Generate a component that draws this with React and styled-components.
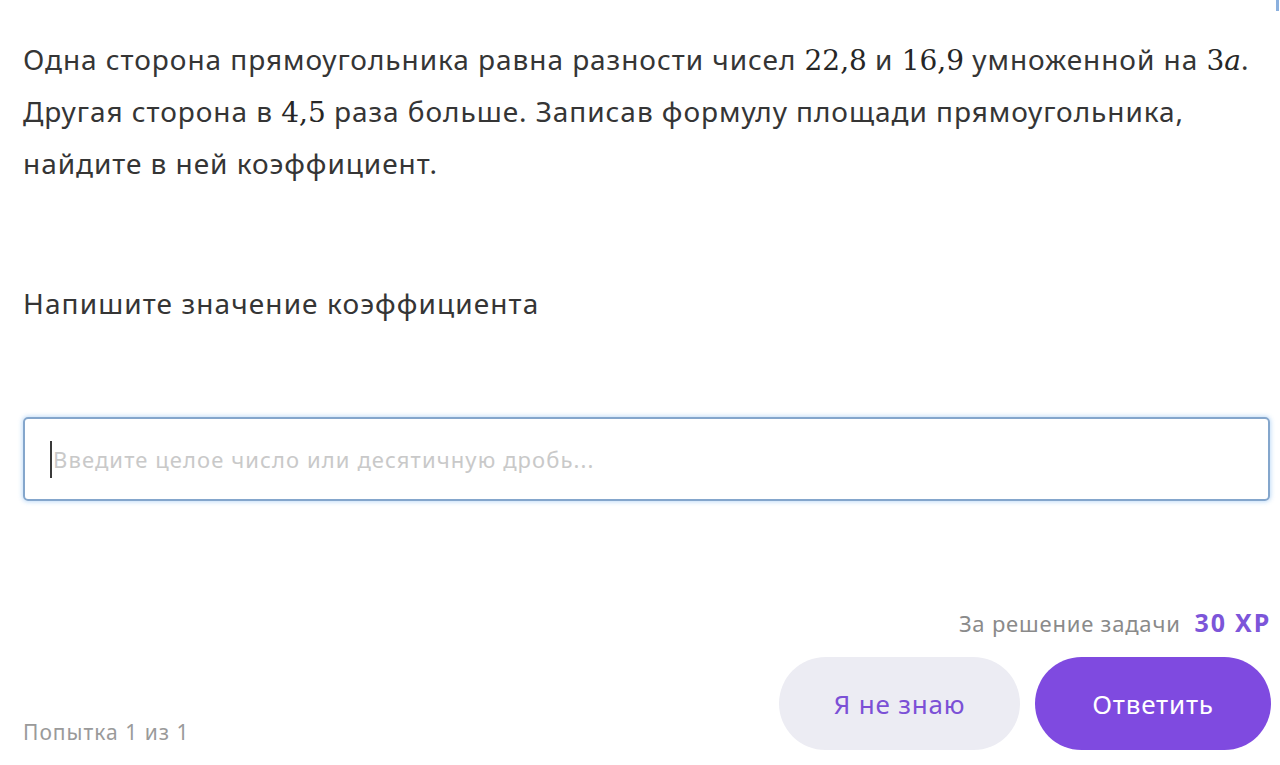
import styled, { createGlobalStyle } from "styled-components";

const GlobalStyle = createGlobalStyle`
  html, body {
    margin: 0;
    padding: 0;
    background: #ffffff;
  }
  body {
    font-family: "Noto Sans", "Open Sans", sans-serif;
    color: #353535;
  }
`;

const Page = styled.div`
  position: relative;
  width: 1280px;
  height: 765px;
  box-sizing: border-box;
  padding: 34px 9px 0 23px;
  display: flex;
  flex-direction: column;
  overflow: hidden;
`;

const EdgeMark = styled.div`
  position: absolute;
  top: 0;
  right: 1px;
  width: 3px;
  height: 11px;
  background: #5a8fd0;
  opacity: 0.7;
`;

const Question = styled.p`
  margin: 0;
  font-size: 28px;
  letter-spacing: 0.95px;
  line-height: 51px;
  color: #353535;
  white-space: nowrap;
`;

const Num = styled.span`
  font-family: "DejaVu Serif", "Liberation Serif", serif;
  font-size: 28px;
  letter-spacing: 0;
  color: #262626;
  font-style: ${(p) => (p.$italic ? "italic" : "normal")};
`;

const Prompt = styled.div`
  margin-top: 94px;
  font-size: 28px;
  letter-spacing: 1.1px;
  line-height: 40px;
  color: #353535;
`;

const Field = styled.div`
  margin-top: 94px;
  width: 1247px;
  height: 84px;
  box-sizing: border-box;
  border: 2px solid #84a6cc;
  border-radius: 5px;
  box-shadow: 0 0 4px 1px rgba(120, 180, 240, 0.45);
  display: flex;
  align-items: center;
  padding-left: 25px;
  gap: 1px;
`;

const Caret = styled.span`
  width: 2px;
  height: 37px;
  background: #3a3a3a;
`;

const Placeholder = styled.span`
  font-size: 22px;
  letter-spacing: 1.1px;
  color: #c9c9c9;
`;

const Footer = styled.div`
  margin-top: 104px;
  display: flex;
  justify-content: space-between;
  align-items: flex-end;
`;

const Attempt = styled.div`
  font-size: 21px;
  letter-spacing: 1px;
  color: #9a9a9a;
  padding-bottom: 4px;
`;

const RightCol = styled.div`
  display: flex;
  flex-direction: column;
  align-items: flex-end;
  gap: 18px;
`;

const Reward = styled.div`
  display: flex;
  align-items: baseline;
  gap: 14px;
  font-size: 22px;
  letter-spacing: 0.8px;
  color: #8a8a8a;
`;

const Xp = styled.span`
  font-size: 25px;
  font-weight: 700;
  letter-spacing: 1.8px;
  color: #7c55d9;
`;

const Buttons = styled.div`
  display: flex;
  gap: 15px;
`;

const Button = styled.button`
  width: ${(p) => p.$w}px;
  height: 93px;
  border: none;
  border-radius: 47px;
  font-family: "Noto Sans", sans-serif;
  font-size: 26px;
  letter-spacing: 0.8px;
  cursor: pointer;
  background: ${(p) => (p.$primary ? "#7f4ae0" : "#ececf3")};
  color: ${(p) => (p.$primary ? "#ffffff" : "#7b50d6")};
`;

export default function App() {
  return (
    <>
      <GlobalStyle />
      <Page>
        <EdgeMark />
        <Question>
          Одна сторона прямоугольника равна разности чисел <Num>22,8</Num> и{" "}
          <Num>16,9</Num> умноженной на <Num>3</Num>
          <Num $italic>a</Num>.
          <br />
          Другая сторона в <Num>4,5</Num> раза больше. Записав формулу площади
          прямоугольника,
          <br />
          найдите в ней коэффициент.
        </Question>
        <Prompt>Напишите значение коэффициента</Prompt>
        <Field>
          <Caret />
          <Placeholder>Введите целое число или десятичную дробь...</Placeholder>
        </Field>
        <Footer>
          <Attempt>Попытка 1 из 1</Attempt>
          <RightCol>
            <Reward>
              За решение задачи <Xp>30 XP</Xp>
            </Reward>
            <Buttons>
              <Button $w={241}>Я не знаю</Button>
              <Button $w={236} $primary>
                Ответить
              </Button>
            </Buttons>
          </RightCol>
        </Footer>
      </Page>
    </>
  );
}
